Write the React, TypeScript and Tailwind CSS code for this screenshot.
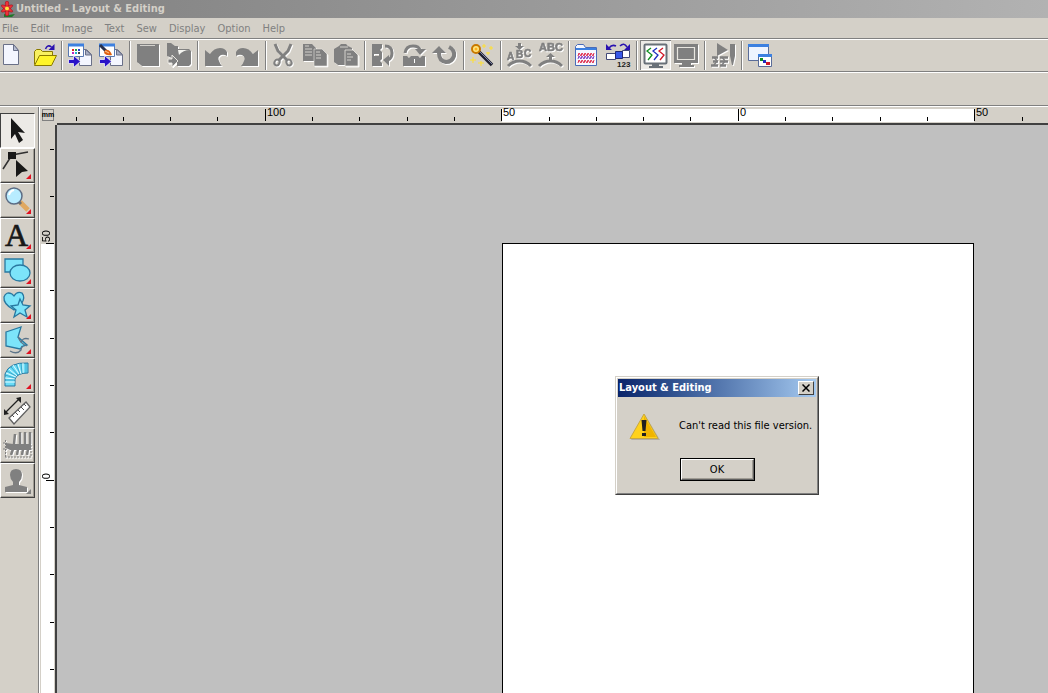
import type { ReactNode } from "react";
import clsx from "clsx";

const menuItems = ["File", "Edit", "Image", "Text", "Sew", "Display", "Option", "Help"];

const PITCH = 47.3;

type Tool = {
  label: string;
  icon: ReactNode;
  disabled?: boolean;
  pressed?: boolean;
  flyout?: boolean;
};

/* ---------- shared drawing parts ---------- */

const Sheet = () => (
  <>
    <path d="M11.5 6.5h7l5 5v11h-12z" fill="#f4f6ff" stroke="#6a7088" />
    <path d="M17.5 6.5v5.500h6z" fill="#a8aec4" stroke="#6a7088" />
  </>
);

const BlueArrow = () => (
  <path d="M0.500 16.500h5v-4l7 6-7 6v-4h-5z" fill="#2a12c8" stroke="#fff" strokeWidth="0.700" />
);

/* ---------- toolbar groups ---------- */

const toolbar: Tool[][] = [
  [
    {
      label: "New",
      icon: (
        <>
          <path d="M3.500 1.500h10l5 6v14h-15z" fill="#f4f6ff" stroke="#6a7088" />
          <path d="M13.500 1.500v6h5z" fill="#b8bed2" stroke="#6a7088" />
        </>
      ),
    },
    {
      label: "Open",
      icon: (
        <>
          <path d="M3.500 21.500v-13l2-2h4l2 2h10v4" fill="#f8f060" stroke="#8a7a00" />
          <path d="M3.500 22.500l5-10h17l-5 10z" fill="#fff42a" stroke="#8a7a00" />
          <path d="M14.500 6q2-5 6-2" fill="none" stroke="#2a12b0" strokeWidth="1.500" />
          <path d="M23.500 1v6h-6z" fill="#2a12b0" />
        </>
      ),
    },
  ],
  [
    {
      label: "Import design",
      icon: (
        <>
          <Sheet />
          <path d="M0.500 1.500h15v12h-15z" fill="#fff" stroke="#5a78b0" />
          <path d="M0 0.500h16v3H0z" fill="#3c80e0" />
          <path d="M4 6h2v2H4z" fill="#e02020" />
          <path d="M7 6h2v2H7z" fill="#20a040" />
          <path d="M10 6h2v2h-2z" fill="#2040d0" />
          <path d="M4 9h2v2H4z" fill="#c020c0" />
          <path d="M7 9h2v2H7z" fill="#20b0d0" />
          <path d="M10 9h2v2h-2z" fill="#404040" />
          <BlueArrow />
        </>
      ),
    },
    {
      label: "Import image",
      icon: (
        <>
          <Sheet />
          <path d="M0.500 1.500h15v12h-15z" fill="#fff" stroke="#5a78b0" />
          <path d="M0 0.500h16v3H0z" fill="#3c80e0" />
          <path d="M1 2l6 6" stroke="#28304c" strokeWidth="3" />
          <path d="M6 7q5-1 7 5-6 1-8-2z" fill="#e06010" />
          <path d="M6 8l4 2" stroke="#ffc890" />
          <BlueArrow />
        </>
      ),
    },
  ],
  [
    {
      label: "Design page",
      disabled: true,
      icon: (
        <>
          <path d="M1 1h22v22H6l-5-4z" fill="#808080" />
          <path d="M4 2.500h15" stroke="#e8e6e0" strokeWidth="0.800" />
        </>
      ),
    },
    {
      label: "Transfer",
      disabled: true,
      icon: (
        <>
          <path d="M0 0h4l4 3h3v3h11l2 2v13l-2 2H10v-6L0 13z" fill="#808080" />
          <path d="M11 7h12q-7 0-11 5z" fill="#f4f4f0" />
          <path d="M1 16h4v-4l6 6-6 6v-4H1z" fill="#808080" stroke="#e8e6e0" />
        </>
      ),
    },
  ],
  [
    {
      label: "Undo",
      disabled: true,
      icon: (
        <path d="M1 7l5 4q4-6 10-6 5 0 7 4v4q-3-2-6-1-4 2-2 6 1 3 3 5H1z" fill="#808080" />
      ),
    },
    {
      label: "Redo",
      disabled: true,
      icon: (
        <path d="M23 7l-5 4Q14 5 8 5 3 5 1 9v4q3-2 6-1 4 2 2 6-1 3-3 5h17z" fill="#808080" />
      ),
    },
  ],
  [
    {
      label: "Cut",
      disabled: true,
      icon: (
        <g stroke="#808080" fill="none">
          <path d="M3 1l3 7 9 9M19 1l-3 7-9 9" strokeWidth="3" />
          <ellipse cx="5" cy="19.500" rx="2.500" ry="3" transform="rotate(25 5 19.500)" strokeWidth="2" />
          <ellipse cx="17" cy="19.500" rx="2.500" ry="3" transform="rotate(-25 17 19.500)" strokeWidth="2" />
        </g>
      ),
    },
    {
      label: "Copy",
      disabled: true,
      icon: (
        <>
          <path d="M0 1h9l4 4v13H0z" fill="#808080" />
          <path d="M2 3h4M2 6h7M2 9h7M2 12h7" stroke="#e8e6e0" strokeWidth="0.800" />
          <path d="M11 6h8l5 5v12H11z" fill="#808080" stroke="#e8e6e0" strokeWidth="0.600" />
          <path d="M13 9h4M13 12h5M13 15h5" stroke="#e8e6e0" strokeWidth="0.800" />
        </>
      ),
    },
    {
      label: "Paste",
      disabled: true,
      icon: (
        <>
          <path d="M0 6l5-3 2-2h5l2 2 4 2v15l-2 2H4l-4-3z" fill="#808080" />
          <path d="M6 4h8" stroke="#e8e6e0" strokeWidth="0.800" />
          <path d="M11 7h8l5 5v11H11z" fill="#808080" stroke="#e8e6e0" strokeWidth="0.800" />
          <path d="M13 11h4M13 14h6M13 17h4" stroke="#e8e6e0" strokeWidth="0.800" />
        </>
      ),
    },
  ],
  [
    {
      label: "Flip vertical",
      disabled: true,
      icon: (
        <>
          <path d="M1 1h10v4l-2 2 2 2v2H1zM1 13h10v3l-2 2 2 2v3H1z" fill="#808080" />
          <path d="M1 12h2M8 12h3" stroke="#808080" strokeWidth="2" />
          <path d="M14 3q7 0 7 7 0 5-4 7" fill="none" stroke="#808080" strokeWidth="3" />
          <path d="M18 12v11l-6-6z" fill="#808080" />
        </>
      ),
    },
    {
      label: "Flip horizontal",
      disabled: true,
      icon: (
        <>
          <path d="M1 13h4l2 2 2-2h3v10H1zM13 13h3l2 2 2-2h3v10H13z" fill="#808080" />
          <path d="M12 13v3M12 20v3" stroke="#808080" strokeWidth="2" />
          <path d="M3 10q1-7 8-7 6 0 7 4" fill="none" stroke="#808080" strokeWidth="3" />
          <path d="M13 6h11l-6 6z" fill="#808080" />
        </>
      ),
    },
    {
      label: "Rotate",
      disabled: true,
      icon: (
        <>
          <path d="M16 4q6 3 5 9-2 6-8 6-7-1-7-9" fill="none" stroke="#808080" strokeWidth="4" />
          <path d="M-1 10l7-7 7 7z" fill="#808080" />
        </>
      ),
    },
  ],
  [
    {
      label: "Wizard",
      icon: (
        <>
          <path d="M8 8l14 14" stroke="#202030" strokeWidth="3.500" />
          <path d="M10 9l12 12" stroke="#8088a8" />
          <circle cx="6" cy="6" r="4" fill="#ffe880" stroke="#c87800" strokeWidth="2" />
          <circle cx="6" cy="6" r="1.500" fill="#ffb020" />
          <path
            d="M14 1v4M12 3h4M21 3v4M19 5h4M3 14v6M0 17h6M11 18v5M8 20h6M18 9v3M16 10h4"
            stroke="#ffe030"
          />
        </>
      ),
    },
  ],
  [
    {
      label: "Fit text below",
      disabled: true,
      icon: (
        <>
          <path d="M11 0h3v3h3l-4.500 4L8 3h3z" fill="#808080" />
          <g
            fill="#808080"
            stroke="#808080"
            strokeWidth="0.600"
            fontFamily="Liberation Sans, sans-serif"
            fontWeight="bold"
            fontSize="10"
          >
            <text x="0" y="17">
              A
            </text>
            <text x="9" y="15">
              B
            </text>
            <text x="17" y="14">
              C
            </text>
          </g>
          <path d="M1 23q5-5 11.500-5T24 23" fill="none" stroke="#808080" strokeWidth="3" />
        </>
      ),
    },
    {
      label: "Fit text above",
      disabled: true,
      icon: (
        <>
          <text
            x="1"
            y="8"
            fill="#808080"
            stroke="#808080"
            strokeWidth="0.600"
            fontFamily="Liberation Sans, sans-serif"
            fontWeight="bold"
            fontSize="11"
          >
            ABC
          </text>
          <path d="M12.500 10l4.500 4h-3v4h-3v-4H8z" fill="#808080" />
          <path d="M1 23q5-5 11.500-5T24 23" fill="none" stroke="#808080" strokeWidth="3" />
        </>
      ),
    },
  ],
  [
    {
      label: "Design property",
      icon: (
        <>
          <path d="M0.500 22.500v-19l2-2h6l2 3h11v18z" fill="#f6f8ff" stroke="#4a6cb8" />
          <path d="M1 5h20v2H1z" fill="#3c80e0" />
          <path
            d="M3 13l1-3 2 3 1-3 2 3 1-3 2 3 1-3 2 3 1-3 2 3 1-3M3 20l1-3 2 3 1-3 2 3 1-3 2 3 1-3 2 3 1-3 2 3 1-3"
            fill="none"
            stroke="#e02848"
          />
          <path
            d="M3 16l1-3 2 3 1-3 2 3 1-3 2 3 1-3 2 3 1-3 2 3 1-3"
            fill="none"
            stroke="#8040c0"
          />
        </>
      ),
    },
    {
      label: "Sewing order",
      icon: (
        <>
          <path d="M3 5q3-4 7-2M14 3q4-4 7 1" fill="none" stroke="#2a12b0" strokeWidth="1.600" />
          <path d="M0 1v6h6zM24 1v6h-6z" fill="#2a12b0" />
          <path d="M16.500 7.500h7v7h-7zM0.500 10.500h9v6h-9z" fill="#fff" stroke="#404878" />
          <path d="M9.500 8.500h7v7h-7z" fill="#3858e8" stroke="#202878" />
          <text
            x="11"
            y="24"
            fill="#202020"
            fontFamily="Liberation Sans, sans-serif"
            fontWeight="bold"
            fontSize="8"
          >
            123
          </text>
        </>
      ),
    },
  ],
  [
    {
      label: "Stitch view",
      pressed: true,
      icon: (
        <>
          <path d="M1.500 2.500q0-1 1-1h20q1 0 1 1v17q0 1-1 1h-20q-1 0-1-1z" fill="#fff" stroke="#687078" strokeWidth="2" />
          <path d="M9 21h7v2h4v2H6v-2h3z" fill="#687078" />
          <g fill="none" strokeWidth="1.300">
            <path d="M8 5l-4 3 5 4-4 5" stroke="#109020" />
            <path d="M14 5l-4 3 5 4-4 5" stroke="#2030c0" />
            <path d="M20 5l-4 3 5 4-4 5" stroke="#d01828" />
          </g>
        </>
      ),
    },
    {
      label: "Realistic view",
      disabled: true,
      icon: (
        <>
          <path d="M0 1h24v19h-7v2h3v2H5v-2h3v-2H0z" fill="#808080" />
          <path d="M3.500 4.500h17v12h-17z" fill="none" stroke="#e8e6e0" strokeWidth="1.200" />
        </>
      ),
    },
  ],
  [
    {
      label: "Stitch simulator",
      disabled: true,
      icon: (
        <>
          <path d="M6 0l11 7-11 6z" fill="#808080" />
          <path d="M19 1h5v12l-2 9h-1l-2-9z" fill="#808080" />
          <path d="M1 14.500h6M9 14.500h8M2 18.500h5M9 18.500h8M0 22.500h7M9 22.500h6" stroke="#808080" strokeWidth="2.500" />
          <path d="M3 14l3 4-3 4M11 14l3 4-3 4" stroke="#808080" strokeWidth="1.500" fill="none" />
        </>
      ),
    },
  ],
  [
    {
      label: "Reference window",
      icon: (
        <>
          <path d="M0.500 1.500h20v16h-20z" fill="#eef4ff" stroke="#5a6c98" />
          <path d="M0 1h21v3H0z" fill="#3c80e0" />
          <path d="M10.500 11.500h13v12h-13z" fill="#fff" stroke="#5a6c98" />
          <path d="M10 11h14v3H10z" fill="#3c80e0" />
          <path d="M12 15h3v3h-3z" fill="#109020" />
          <path d="M15 17h3v3h-3z" fill="#2030c0" />
          <path d="M18 19h4v3h-4z" fill="#d01828" />
        </>
      ),
    },
  ],
];

/* ---------- toolbox on the left ---------- */

const toolbox: Tool[] = [
  {
    label: "Select",
    pressed: true,
    icon: <path d="M10 4l14 15-7-1 5 8-4 3-4-9-4 5z" fill="#181818" />,
  },
  {
    label: "Edit point",
    flyout: true,
    icon: (
      <>
        <path d="M2 20L11 6l16-3" fill="none" stroke="#303030" strokeWidth="1.500" />
        <path d="M7 3h8v7H7z" fill="#181818" />
        <path d="M15 11l12 11-6 1-6 5z" fill="#181818" />
      </>
    ),
  },
  {
    label: "Zoom",
    flyout: true,
    icon: (
      <>
        <path d="M19 18l8 8" stroke="#e0a860" strokeWidth="5" />
        <path d="M18 18l2 2" stroke="#707070" strokeWidth="3" />
        <circle cx="13" cy="12" r="8" fill="#b8ecff" stroke="#5c6c84" strokeWidth="1.500" />
        <path d="M8 11q1-4 5-5" stroke="#fff" strokeWidth="2" fill="none" />
      </>
    ),
  },
  {
    label: "Text tool",
    flyout: true,
    icon: (
      <text
        x="4"
        y="27"
        fill="#181818"
        stroke="#181818"
        strokeWidth="0.700"
        fontFamily="Liberation Serif, serif"
        fontSize="32"
      >
        A
      </text>
    ),
  },
  {
    label: "Shapes",
    flyout: true,
    icon: (
      <g fill="#7ce4fa" stroke="#2878a0" strokeWidth="1.300">
        <path d="M4 5h18v13H4z" />
        <ellipse cx="19" cy="19" rx="10" ry="8" />
      </g>
    ),
  },
  {
    label: "Outline shapes",
    flyout: true,
    icon: (
      <g fill="#7ce4fa" stroke="#2878a0" strokeWidth="1.300">
        <path d="M13 21Q2 15 3 8q2-6 8-3l2 2q3-5 8-3 4 5-1 11z" />
        <path d="M19 10l3 6 7 1-5 4 2 7-7-4-6 4 2-7-5-4 7-1z" />
      </g>
    ),
  },
  {
    label: "Draw",
    flyout: true,
    icon: (
      <g stroke="#2878a0" strokeWidth="1.300">
        <path d="M5 8l15-5-3 10 9 8-4 1-3 3-14-3z" fill="#7ce4fa" />
        <path d="M17 13q3 7 9 9M28 15q-7-2-8 4M9 27q7 4 11-1l1-4" fill="none" stroke="#5c7488" />
      </g>
    ),
  },
  {
    label: "Manual punch",
    flyout: true,
    icon: (
      <>
        <path d="M4 27V15Q8 3 27 4v10q-11 0-13 6v7z" fill="#6adcf6" stroke="#2878a0" />
        <path d="M4 23h10M4 19l10 1M5 14l10 4M8 10l8 7M12 6l6 9M17 5l3 10M22 4v10" stroke="#e4fbff" />
        <path d="M4 21h10M4 16l10 3M6 12l9 5M10 8l7 8M15 5l4 10M20 4l1 10M25 4v10" stroke="#2890b8" strokeWidth="0.700" />
      </>
    ),
  },
  {
    label: "Measure",
    icon: (
      <>
        <path d="M4 19L19 4" stroke="#202020" strokeWidth="1.300" />
        <path d="M3 21v-6l5 5zM20 3v6l-5-5z" fill="#202020" />
        <path d="M8 24L25 8l4 5-16 17z" fill="#fff" stroke="#606060" strokeWidth="1.300" />
        <path d="M11 21l2 2M14 18l3 3M17 16l2 2M20 13l3 3M23 10l2 2" stroke="#505050" />
      </>
    ),
  },
  {
    label: "Split stitches",
    disabled: true,
    icon: (
      <>
        <path d="M5 14l7 1h18v6H9l-4-2z" fill="#808080" />
        <path d="M14 5l-1 10M19 3v12M24 3v12M29 3v12M12 20l-2 6M17 20l-1 6M22 20l-1 6M27 20l-1 6" stroke="#808080" strokeWidth="2.500" />
        <path d="M4.500 11v17M2 14h4M2 20h4M4 28h26M30 16v12" stroke="#808080" strokeDasharray="2 1" fill="none" />
      </>
    ),
  },
  {
    label: "Stamp",
    disabled: true,
    flyout: true,
    icon: (
      <path d="M15 5q6 0 6 6 0 4-3 7v3l8 2v5H4v-5l8-2v-3q-3-3-3-7 0-6 6-6z" fill="#808080" />
    ),
  },
];

function ToolbarButton({ tool }: { tool: Tool }) {
  return (
    <button
      type="button"
      aria-label={tool.label}
      disabled={tool.disabled}
      className={clsx(
        "h-[30px] w-[31px] shrink-0 p-[3px]",
        tool.pressed && "bg-[#eceae6] shadow-[inset_1px_1px_0_#808080,inset_-1px_-1px_0_#fff]",
      )}
    >
      <svg
        viewBox="0 0 24 24"
        className={clsx("size-6 max-w-none overflow-visible", tool.disabled && "drop-shadow-[1px_1px_0_#fff]")}
      >
        {tool.icon}
      </svg>
    </button>
  );
}

function ToolboxButton({ tool }: { tool: Tool }) {
  return (
    <button
      type="button"
      aria-label={tool.label}
      disabled={tool.disabled}
      className={clsx(
        "block h-[35px] w-[35px] border",
        tool.pressed
          ? "border-t-[#404040] border-l-[#404040] border-r-white border-b-white bg-[#eceae6]"
          : "border-t-white border-l-white border-r-[#404040] border-b-[#404040] shadow-[inset_-1px_-1px_0_#a09c94]",
      )}
    >
      <svg viewBox="0 0 33 33" className="size-[33px] overflow-visible">
        <g className={clsx(tool.disabled && "drop-shadow-[1px_1px_0_#fff]")}>{tool.icon}</g>
        {tool.flyout && <path d="M30 25v5h-5z" fill={tool.disabled ? "#808080" : "#e01020"} />}
      </svg>
    </button>
  );
}

function TitleBar() {
  return (
    <header className="flex h-[18px] items-center bg-linear-to-r from-[#808080] to-[#b2b2b2]">
      <svg viewBox="0 0 16 16" className="size-4 shrink-0">
        <path d="M4 13l4 1 7-1-3 3H4z" fill="#207828" />
        <g fill="#f03038" stroke="#a01020" strokeWidth="0.600">
          <ellipse cx="7" cy="3" rx="1.800" ry="3" />
          <ellipse cx="7" cy="12" rx="1.800" ry="3" />
          <ellipse cx="7" cy="7.500" rx="1.800" ry="6.500" transform="rotate(60 7 7.500)" />
          <ellipse cx="7" cy="7.500" rx="1.800" ry="6.500" transform="rotate(120 7 7.500)" />
        </g>
        <circle cx="7" cy="7.500" r="2" fill="#ffe040" />
      </svg>
      <h1 className="text-[11px] font-bold text-[#d4d0c8]">Untitled - Layout &amp; Editing</h1>
    </header>
  );
}

function HorizontalRuler() {
  const ticks = Array.from({ length: 21 }, (_, i) => i);
  const labels: Record<number, string> = { 4: "100", 9: "50", 14: "0", 19: "50" };

  return (
    <div className="relative h-[18px] overflow-hidden border-b-2 border-[#404040] bg-[#d4d0c8] pt-[2px]">
      <div className="ml-[445px] h-[13px] w-[472px] bg-white" />
      {ticks.map((i) => (
        <span
          key={i}
          className={clsx("absolute bottom-[2px] w-px bg-black", labels[i] ? "h-3" : "h-1")}
          style={{ left: Math.floor(19 + i * PITCH) }}
        >
          {labels[i] && (
            <span className="absolute top-0 left-[2px] font-['Liberation_Sans',sans-serif] text-[11px] leading-[7px]">
              {labels[i]}
            </span>
          )}
        </span>
      ))}
    </div>
  );
}

function VerticalRuler() {
  const ticks = Array.from({ length: 12 }, (_, i) => i);
  const labels: Record<number, string> = { 2: "50", 7: "0" };

  return (
    <div className="relative w-[17px] shrink-0 overflow-hidden border-r-2 border-[#404040] bg-[#d4d0c8] pr-px pl-px">
      <div className="mt-[119px] h-full bg-white" />
      {ticks.map((i) => (
        <span
          key={i}
          className={clsx("absolute right-px h-px bg-black", labels[i] ? "w-2" : "w-1")}
          style={{ top: Math.floor(24 + i * PITCH) }}
        >
          {labels[i] && (
            <span className="absolute right-[2px] bottom-[2px] rotate-180 font-['Liberation_Sans',sans-serif] text-[11px] leading-[12px] [writing-mode:vertical-rl]">
              {labels[i]}
            </span>
          )}
        </span>
      ))}
    </div>
  );
}

function MessageDialog() {
  return (
    <div
      role="alertdialog"
      aria-labelledby="dialog-title"
      aria-describedby="dialog-text"
      className="absolute top-[376px] left-[615px] w-[204px] border border-t-[#d4d0c8] border-l-[#d4d0c8] border-r-[#404040] border-b-[#404040] bg-[#d4d0c8]"
    >
      <div className="border border-t-white border-l-white border-r-[#808080] border-b-[#808080] p-px">
        <div className="flex h-[18px] items-center justify-between bg-linear-to-r from-[#0a246a] to-[#a6caf0] pr-[2px] pl-px">
          <h2 id="dialog-title" className="text-[11px] font-bold text-white">
            Layout &amp; Editing
          </h2>
          <button
            type="button"
            aria-label="Close"
            className="flex h-[14px] w-4 items-center justify-center border border-t-white border-l-white border-r-[#404040] border-b-[#404040] bg-[#d4d0c8]"
          >
            <svg viewBox="0 0 8 8" className="size-2">
              <path d="M0.500 0.500l7 7M7.500 0.500l-7 7" stroke="#000" strokeWidth="1.500" />
            </svg>
          </button>
        </div>
        <div className="flex items-center pt-[14px] pl-[10px]">
          <svg viewBox="0 0 32 32" className="size-8 shrink-0">
            <path d="M17 4L32 29H3z" fill="#908c84" opacity="0.5" />
            <path d="M16 3L30 27.500H2z" fill="#ffd21c" stroke="#c8a840" strokeLinejoin="round" />
            <path d="M16 5l12 21H16z" fill="#f0b400" />
            <path d="M13.500 9h5l-1 11h-3zM14 22h4v3h-4z" fill="#202020" />
          </svg>
          <p id="dialog-text" className="pb-[2px] pl-[19px] text-[11px] whitespace-nowrap text-black">
            Can't read this file version.
          </p>
        </div>
        <div className="flex justify-center pt-[15px] pb-[11px]">
          <button type="button" className="h-[23px] w-[75px] border border-black bg-[#d4d0c8] text-[11px] text-black">
            <span className="flex h-full items-center justify-center border border-t-white border-l-white border-r-[#606060] border-b-[#606060] shadow-[inset_-1px_-1px_0_#a09c94]">
              OK
            </span>
          </button>
        </div>
      </div>
    </div>
  );
}

export default function App() {
  return (
    <div className="relative flex h-screen flex-col overflow-hidden bg-[#d4d0c8] font-['DejaVu_Sans_Condensed','DejaVu_Sans',sans-serif] leading-[14px]">
      <TitleBar />

      {/* MENU */}
      <nav className="flex h-5 items-center gap-3 px-[2px] pt-[2px] text-[11px] text-[#808080]">
        {menuItems.map((item) => (
          <button key={item} type="button">
            {item}
          </button>
        ))}
      </nav>

      {/* TOOLBAR */}
      <div className="flex h-[33px] shrink-0 border-t border-[#808080] shadow-[inset_0_1px_0_#fff]">
        <div className="-ml-[3px] flex pt-px">
          {toolbar.map((group, i) => (
            <div key={i} className="flex">
              {i > 0 && (
                <div className="flex w-[6px] justify-center py-px">
                  <div className="w-[2px] border-r border-l border-l-[#808080] border-r-white" />
                </div>
              )}
              {group.map((tool) => (
                <ToolbarButton key={tool.label} tool={tool} />
              ))}
            </div>
          ))}
        </div>
      </div>

      {/* PROPERTY BAR */}
      <div className="h-[35px] shrink-0 border-t border-b border-t-[#808080] border-b-[#808080] shadow-[inset_0_1px_0_#fff]" />

      {/* WORKSPACE */}
      <div className="flex min-h-0 flex-1 border-t border-white">
        <aside className="w-[38px] shrink-0 pt-[6px]">
          {toolbox.map((tool) => (
            <ToolboxButton key={tool.label} tool={tool} />
          ))}
        </aside>
        <div className="w-[2px] shrink-0 border-r border-l border-l-[#808080] border-r-white" />

        <main className="flex min-w-0 flex-1 flex-col">
          <div className="flex shrink-0">
            <div className="w-[17px] shrink-0 pt-[2px] pl-[2px]">
              <button
                type="button"
                className="flex h-3 w-3 items-center justify-center border border-[#808080] font-['Liberation_Sans',sans-serif] text-[7px] font-bold text-black"
              >
                mm
              </button>
            </div>
            <div className="min-w-0 flex-1">
              <HorizontalRuler />
            </div>
          </div>
          <div className="flex min-h-0 flex-1">
            <VerticalRuler />
            <div className="flex min-w-0 flex-1 bg-[#c0c0c0] pt-[118px] pl-[445px]">
              <div className="w-[472px] shrink-0 border-x border-t border-black bg-white" />
            </div>
          </div>
        </main>
      </div>

      <MessageDialog />
    </div>
  );
}
